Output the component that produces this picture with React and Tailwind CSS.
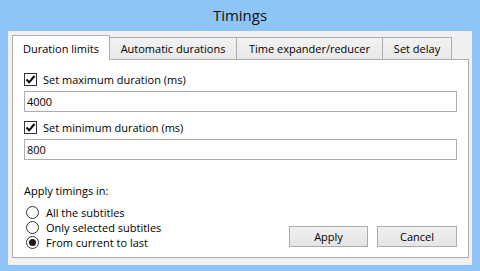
import React from "react";

function Check() {
  return (
    <div className="w-[13px] h-[13px] border border-[#333333] bg-white flex items-center justify-center shrink-0">
      <svg width="11" height="11" viewBox="0 0 11 11">
        <path d="M1.5 5.5 L4.2 8.3 L9.5 2" fill="none" stroke="#000" strokeWidth="2" />
      </svg>
    </div>
  );
}

function Radio({ on }) {
  return (
    <div className="w-[13px] h-[13px] rounded-full border border-[#333333] bg-white flex items-center justify-center shrink-0">
      {on && <div className="w-[7px] h-[7px] rounded-full bg-[#1a1a1a]" />}
    </div>
  );
}

export default function App() {
  const font = { fontFamily: '"Open Sans", "Noto Sans", sans-serif' };
  return (
    <div className="w-[480px] h-[271px] bg-[#8ec4f6] flex flex-col text-black" style={font}>
      <div className="h-[31px] flex items-center justify-center text-[15px] text-[#111]">Timings</div>
      <div className="mx-[8px] h-[234px] bg-[#f0f0f0] pt-[4px] px-[4px] flex flex-col">
        <div className="flex items-end h-[24px] text-[11px] leading-[15px]">
          <div className="relative z-10 h-[25px] w-[98px] bg-white border border-b-0 border-[#acacac] flex items-center justify-center -mb-[1px]">Duration limits</div>
          <div className="h-[22px] w-[127px] bg-gradient-to-b from-[#f2f2f2] to-[#e8e8e8] border border-l-0 border-b-0 border-[#acacac] flex items-center justify-center">Automatic durations</div>
          <div className="h-[22px] w-[146px] bg-gradient-to-b from-[#f2f2f2] to-[#e8e8e8] border border-l-0 border-b-0 border-[#acacac] flex items-center justify-center">Time expander/reducer</div>
          <div className="h-[22px] w-[69px] bg-gradient-to-b from-[#f2f2f2] to-[#e8e8e8] border border-l-0 border-b-0 border-[#acacac] flex items-center justify-center">Set delay</div>
        </div>
        <div className="w-[457px] h-[199px] bg-white border border-[#acacac] px-[11px] pt-[11px] flex flex-col text-[11px] leading-[15px]">
          <div className="h-[16px] flex items-center gap-[6px]">
            <Check />
            <span>Set maximum duration (ms)</span>
          </div>
          <div className="mt-[4px] h-[21px] border border-[#abadb3] flex items-center px-[2px]">4000</div>
          <div className="mt-[7px] h-[16px] flex items-center gap-[6px]">
            <Check />
            <span>Set minimum duration (ms)</span>
          </div>
          <div className="mt-[4px] h-[21px] border border-[#abadb3] flex items-center px-[2px]">800</div>
          <div className="mt-[22px] h-[16px] flex items-center">Apply timings in:</div>
          <div className="flex justify-between items-end">
            <div className="flex flex-col mt-[7px]">
              <div className="h-[15px] flex items-center gap-[7px] pl-[2px]"><Radio /><span>All the subtitles</span></div>
              <div className="h-[15px] flex items-center gap-[7px] pl-[2px]"><Radio /><span>Only selected subtitles</span></div>
              <div className="h-[15px] flex items-center gap-[7px] pl-[2px]"><Radio on /><span>From current to last</span></div>
            </div>
            <div className="flex gap-[9px] mb-[3px]">
              <div className="w-[79px] h-[21px] border border-[#acacac] bg-gradient-to-b from-[#f0f0f0] to-[#e5e5e5] flex items-center justify-center">Apply</div>
              <div className="w-[80px] h-[21px] border border-[#acacac] bg-gradient-to-b from-[#f0f0f0] to-[#e5e5e5] flex items-center justify-center">Cancel</div>
            </div>
          </div>
        </div>
      </div>
    </div>
  );
}
